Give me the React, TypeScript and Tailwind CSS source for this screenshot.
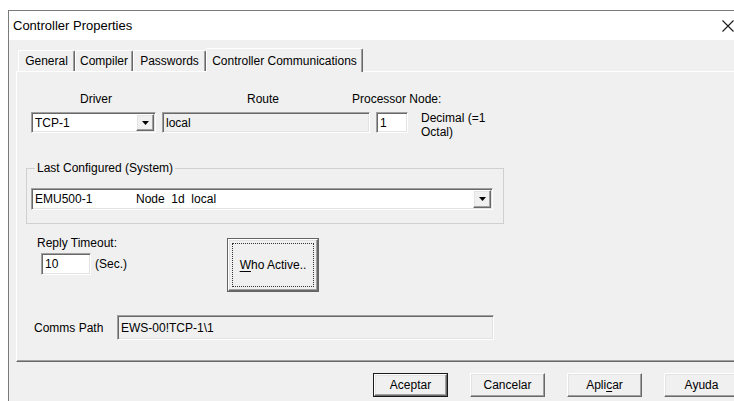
import type { ReactNode } from 'react';

const sunken =
  'border border-t-[#a0a0a0] border-l-[#a0a0a0] border-r-white border-b-white shadow-[inset_1px_1px_0_#696969,inset_-1px_-1px_0_#e3e3e3]';
const raised =
  'border border-t-white border-l-white border-r-[#696969] border-b-[#696969] shadow-[inset_-1px_-1px_0_#a0a0a0,inset_1px_1px_0_#e3e3e3] bg-[#f0f0f0]';

function DropArrow() {
  return (
    <div className={`flex h-full w-[18px] shrink-0 items-center justify-center ${raised}`}>
      <svg width="7" height="4" viewBox="0 0 7 4">
        <polygon points="0,0 7,0 3.5,4" fill="#000" />
      </svg>
    </div>
  );
}

function Combo({ width, height, children }: { width: string; height: string; children: ReactNode }) {
  return (
    <div className={`flex items-stretch bg-white ${sunken} ${width} ${height}`}>
      <div className="flex flex-1 items-center pl-[3px]">{children}</div>
      <div className="py-[1px] pr-[1px]">
        <DropArrow />
      </div>
    </div>
  );
}

function Field({ className, value, white }: { className: string; value: string; white?: boolean }) {
  return (
    <div className={`flex items-center pl-[3px] ${sunken} ${white ? 'bg-white' : 'bg-[#f0f0f0]'} ${className}`}>
      {value}
    </div>
  );
}

function Tab({ label, active, width }: { label: string; active?: boolean; width: string }) {
  return (
    <div
      className={`flex items-center justify-center rounded-t-[2px] border-t border-l border-r border-t-white border-l-white border-r-[#696969] shadow-[inset_-1px_0_0_#a0a0a0] bg-[#f0f0f0] ${width} ${
        active ? 'relative z-10 -mb-[1px] h-[24px]' : 'h-[21px]'
      }`}
    >
      {label}
    </div>
  );
}

function DialogButton({ children, isDefault }: { children: ReactNode; isDefault?: boolean }) {
  return (
    <div className={`h-[24px] w-[75px] ${isDefault ? 'border border-[#1a1a1a]' : ''}`}>
      <div className={`flex h-full w-full items-center justify-center ${raised}`}>{children}</div>
    </div>
  );
}

export default function App() {
  return (
    <div className="h-[401px] w-[734px] overflow-hidden bg-white font-['Liberation_Sans',Arial,sans-serif] text-[12px] leading-[14px] text-black">
      <div className="ml-[8px] mt-[10px] h-[391px] w-[740px] border-l border-t border-[#7a7a7a] bg-[#f0f0f0]">
        {/* title bar */}
        <div className="flex h-[29px] items-center justify-between bg-white pl-[4px] pr-[14px]">
          <span className="text-[13px]">Controller Properties</span>
          <svg width="12" height="12" viewBox="0 0 12 12" className="mt-[1px]">
            <path d="M0.5 0.5 L11.5 11.5 M11.5 0.5 L0.5 11.5" stroke="#1a1a1a" strokeWidth="1.1" fill="none" />
          </svg>
        </div>

        <div className="pl-[7px] pt-[8px]">
          {/* tab strip */}
          <div className="flex h-[23px] items-end pl-[2px]">
            <Tab label="General" width="w-[57px]" />
            <Tab label="Compiler" width="w-[58px]" />
            <Tab label="Passwords" width="w-[73px]" />
            <Tab label="Controller Communications" width="w-[157px]" active />
          </div>

          {/* tab page */}
          <div className="h-[291px] w-[740px] border border-t-white border-l-white border-r-[#696969] border-b-[#696969] shadow-[inset_0_-1px_0_#a0a0a0] pl-[9px]">
            <div className="ml-[5px] mt-[20px] flex">
              <div className="w-[130px] text-center">Driver</div>
              <div className="ml-[13px] w-[178px] text-center">Route</div>
              <div>Processor Node:</div>
            </div>

            <div className="ml-[5px] mt-[6px] flex items-start">
              <Combo width="w-[125px]" height="h-[21px]">
                TCP-1
              </Combo>
              <Field className="ml-[6px] h-[21px] w-[208px]" value="local" />
              <Field className="ml-[6px] h-[21px] w-[32px]" value="1" white />
              <div className="ml-[13px] -mt-[1px]">
                Decimal (=1
                <br />
                Octal)
              </div>
            </div>

            <fieldset className="mt-[22px] w-[478px] border border-[#d0d0d0] px-[4px] pb-[13px]">
              <legend className="ml-[4px] px-[2px]">Last Configured (System)</legend>
              <div className="mt-[13px]">
                <Combo width="w-[462px]" height="h-[22px]">
                  <span className="w-[101px]">EMU500-1</span>
                  <span className="whitespace-pre">Node  1d  local</span>
                </Combo>
              </div>
            </fieldset>

            <div className="mt-[12px] flex items-start">
              <div className="ml-[11px] w-[190px]">
                <div>Reply Timeout:</div>
                <div className="ml-[4px] mt-[3px] flex items-center">
                  <Field className="h-[22px] w-[50px]" value="10" white />
                  <span className="ml-[4px]">(Sec.)</span>
                </div>
              </div>
              <div className="mt-[2px] h-[54px] w-[92px] border border-[#646464]">
                <div className={`h-full w-full p-[3px] ${raised}`}>
                  <div className="flex h-full w-full items-center justify-center border border-dotted border-[#333]">
                    <span>
                      <span className="underline underline-offset-2">W</span>ho Active..
                    </span>
                  </div>
                </div>
              </div>
            </div>

            <div className="ml-[8px] mt-[23px] flex items-center">
              <div className="w-[83px]">Comms Path</div>
              <Field className="h-[25px] w-[377px]" value="EWS-00!TCP-1\1" />
            </div>
          </div>

          {/* dialog buttons */}
          <div className="mt-[11px] flex gap-[22px] pl-[357px]">
            <DialogButton isDefault>Aceptar</DialogButton>
            <DialogButton>Cancelar</DialogButton>
            <DialogButton>
              <span>
                Apli<span className="underline underline-offset-2">c</span>ar
              </span>
            </DialogButton>
            <DialogButton>Ayuda</DialogButton>
          </div>
        </div>
      </div>
    </div>
  );
}
